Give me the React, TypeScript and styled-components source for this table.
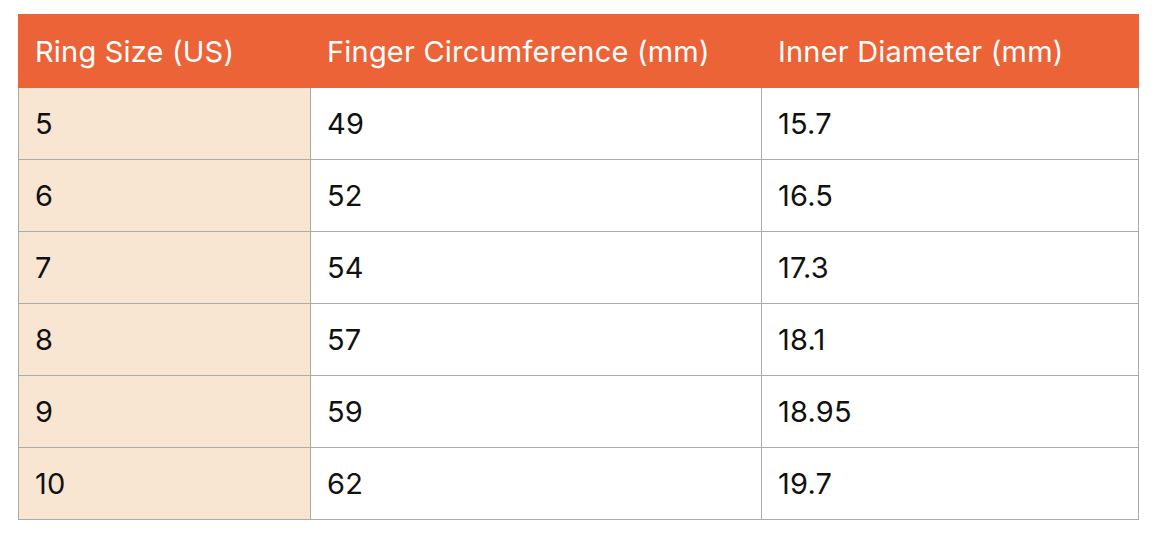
import styled, { createGlobalStyle } from "styled-components";

const GlobalStyle = createGlobalStyle`
  body {
    margin: 0;
    background: #ffffff;
    font-family: Inter, "Noto Sans", sans-serif;
  }
`;

const Page = styled.div`
  padding: 14px 18px;
`;

const Table = styled.table`
  width: 1120px;
  border-collapse: collapse;
  table-layout: fixed;
  font-size: 29px;
  letter-spacing: 0.2px;
`;

const HeadCell = styled.th`
  height: 72px;
  padding: 0 16px;
  background: #ec6337;
  color: #ffffff;
  font-weight: 400;
  text-align: left;
  border: 1px solid #ec6337;
`;

const Cell = styled.td<{ $first?: boolean }>`
  height: 71px;
  padding: 0 16px;
  color: #111111;
  background: ${({ $first }) => ($first ? "#f8e6d3" : "#ffffff")};
  border: 1px solid #ababab;
`;

const rows = [
  ["5", "49", "15.7"],
  ["6", "52", "16.5"],
  ["7", "54", "17.3"],
  ["8", "57", "18.1"],
  ["9", "59", "18.95"],
  ["10", "62", "19.7"],
];

const App = () => {
  return (
    <Page>
      <GlobalStyle />
      <Table>
        <colgroup>
          <col style={{ width: 292 }} />
          <col style={{ width: 451 }} />
          <col style={{ width: 377 }} />
        </colgroup>
        <thead>
          <tr>
            <HeadCell>Ring Size (US)</HeadCell>
            <HeadCell>Finger Circumference (mm)</HeadCell>
            <HeadCell>Inner Diameter (mm)</HeadCell>
          </tr>
        </thead>
        <tbody>
          {rows.map((row) => (
            <tr key={row[0]}>
              {row.map((value, i) => (
                <Cell key={i} $first={i === 0}>
                  {value}
                </Cell>
              ))}
            </tr>
          ))}
        </tbody>
      </Table>
    </Page>
  );
};

export default App;
